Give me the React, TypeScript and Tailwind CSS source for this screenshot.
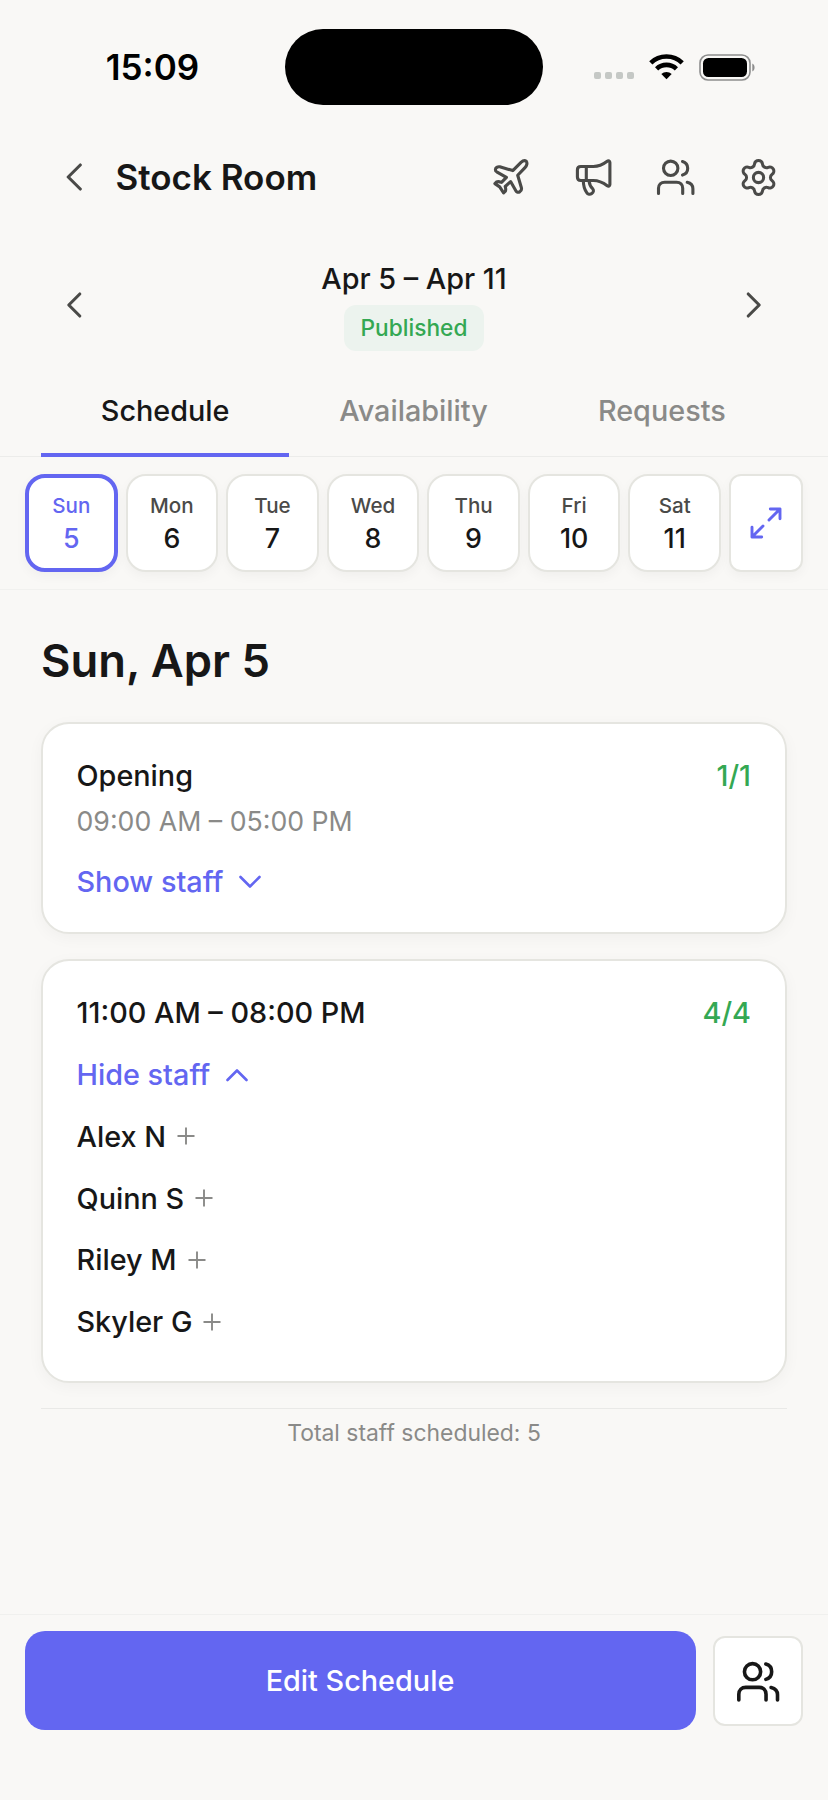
import type { ReactNode } from "react";

type Day = {
  label: string;
  date: number;
};

type Shift = {
  id: string;
  title: string;
  time?: string;
  filled: string;
  staff: string[];
  expanded: boolean;
};

const DAYS: Day[] = [
  { label: "Sun", date: 5 },
  { label: "Mon", date: 6 },
  { label: "Tue", date: 7 },
  { label: "Wed", date: 8 },
  { label: "Thu", date: 9 },
  { label: "Fri", date: 10 },
  { label: "Sat", date: 11 },
];

const TABS = ["Schedule", "Availability", "Requests"];

const SHIFTS: Shift[] = [
  {
    id: "opening",
    title: "Opening",
    time: "09:00 AM – 05:00 PM",
    filled: "1/1",
    staff: [],
    expanded: false,
  },
  {
    id: "midday",
    title: "11:00 AM – 08:00 PM",
    filled: "4/4",
    staff: ["Alex N", "Quinn S", "Riley M", "Skyler G"],
    expanded: true,
  },
];

type IconProps = {
  className?: string;
  viewBox?: string;
  strokeWidth?: number;
  children: ReactNode;
};

function Icon({ className = "size-10", viewBox = "0 0 40 40", strokeWidth = 3.1, children }: IconProps) {
  return (
    <svg
      className={`shrink-0 ${className}`}
      viewBox={viewBox}
      fill="none"
      stroke="currentColor"
      strokeWidth={strokeWidth}
      strokeLinecap="round"
      strokeLinejoin="round"
    >
      {children}
    </svg>
  );
}

function PlaneIcon() {
  return (
    <Icon>
      <path d="M34.300 4.200c-1.300-.9-3.600-.4-5.300 1.200L20.800 13.600 7.800 9.800c-2.200-.5-4.400 1-4.400 2.900 0 .9.500 1.600 1.300 2.100l9.700 5.600-4.900 5c-1.600-.6-3.500-1.100-4.900-.4l-1.700 1.600 4.800 3.300 3.900 6 1.800-1.700c.6-1.600.3-3.200-.2-4.700l5.400-4.900 5.400 9.400c.6 1.200 2.300 1.700 3.600.9 1.500-.9 2.200-2.300 1.800-4.100l-3.700-12.500 7.300-7.700c1.900-1.900 2.500-4.800 1.300-6.100z" />
    </Icon>
  );
}

function MegaphoneIcon() {
  return (
    <Icon viewBox="0.7 0 40 40">
      <path d="M7.500 9.500h12.500c6 0 10-2.200 13.900-5.200 1.200-.9 2.700-.3 2.700 1.200v22c0 1.500-1.500 2-2.700 1.200-3.900-3-7.900-5.200-13.900-5.200H7.500c-2 0-3.400-1.400-3.400-3.400v-7.200c0-2 1.400-3.400 3.400-3.400z" />
      <path d="M13 9.500v14" />
      <path d="M10 23.700c.1 4.500 1.100 8.500 3.300 11.700 1.200 2.100 3.500 2.300 5.200 1.100 1.800-1.200 2.100-3.200 1-4.600-2.400-2.200-3.400-4.700-3.800-8.200" />
    </Icon>
  );
}

function UsersIcon({ className, strokeWidth }: { className?: string; strokeWidth?: number }) {
  return (
    <Icon className={className} strokeWidth={strokeWidth}>
      <circle cx="14.700" cy="11.300" r="7.200" />
      <path d="M26.500 4.500c3.200.9 5.200 3.500 5.200 6.800s-2 5.900-5.200 6.800" />
      <path d="M2.500 36.500v-5.200c0-3.700 2.600-6.100 6.200-6.100h11.900c3.700 0 6.100 2.400 6.100 6.100v5.200" />
      <path d="M31.200 25.300c3.500.8 5.700 3.200 5.700 6.500v4.700" />
    </Icon>
  );
}

function SettingsIcon() {
  return (
    <Icon className="size-[41px]" viewBox="0 0 24 24" strokeWidth={1.8}>
      <path d="M9.671 4.136a2.340 2.340 0 0 1 4.659 0 2.340 2.340 0 0 0 3.319 1.915 2.340 2.340 0 0 1 2.330 4.033 2.340 2.340 0 0 0 0 3.831 2.340 2.340 0 0 1-2.330 4.033 2.340 2.340 0 0 0-3.319 1.915 2.340 2.340 0 0 1-4.659 0 2.340 2.340 0 0 0-3.320-1.915 2.340 2.340 0 0 1-2.330-4.033 2.340 2.340 0 0 0 0-3.831A2.340 2.340 0 0 1 6.350 6.051a2.340 2.340 0 0 0 3.319-1.915" />
      <circle cx="12" cy="12" r="3" />
    </Icon>
  );
}

function StatusBar() {
  return (
    <div className="flex h-[132px] items-start">
      <div className="flex h-[134px] w-[285px] items-center justify-center pl-5 text-[35px] font-semibold text-black">
        15:09
      </div>
      <div className="mt-[28.500px] h-[76px] w-[258px] rounded-full bg-black" />
      <div className="flex h-[134px] items-center pl-[51px]">
        <div className="mt-[17px] flex gap-1">
          {[0, 1, 2, 3].map((dot) => (
            <span key={dot} className="size-[7px] rounded-[2px] bg-[#c5c8c5]" />
          ))}
        </div>
        <svg className="ml-[15px] h-[26px] w-[35px]" viewBox="0 0 35 26" fill="none" stroke="#000">
          <path d="M1.800 8.800C10.400.4 24.600.4 33.200 8.800" strokeWidth="4.600" />
          <path d="M7.600 14.800c5.500-5.300 14.300-5.300 19.800 0" strokeWidth="4.600" />
          <path d="M12.300 19.900c3-2.700 7.400-2.700 10.400 0L17.500 25.300z" fill="#000" stroke="none" />
        </svg>
        <svg className="ml-[15px] h-[27px] w-[57px]" viewBox="0 0 57 27">
          <rect x="1" y="1" width="50" height="25" rx="8" fill="none" stroke="#8d8d8d" strokeWidth="1.600" />
          <rect x="4" y="4" width="44" height="19" rx="5.500" fill="#000" />
          <path d="M53.300 9.500c3 1.200 3 6.800 0 8z" fill="#8d8d8d" />
        </svg>
      </div>
    </div>
  );
}

function Header() {
  return (
    <header className="flex h-[90px] items-center pl-[66px] pr-[49.500px] text-[#4a4a48]">
      <Icon className="h-7 w-4" viewBox="0 0 16 28">
        <path d="M14.300 2 2.200 14l12.100 12" />
      </Icon>
      <h1 className="ml-[33.500px] text-[35px] font-semibold text-[#171717]">Stock Room</h1>
      <div className="ml-auto flex items-center gap-[42px]">
        <PlaneIcon />
        <MegaphoneIcon />
        <UsersIcon />
        <SettingsIcon />
      </div>
    </header>
  );
}

function WeekPicker() {
  return (
    <div className="flex h-[166px] items-center justify-between px-[66px] text-[#4a4a48]">
      <Icon className="h-7 w-4" viewBox="0 0 16 28">
        <path d="M13.800 3 2.800 14l11 11" />
      </Icon>
      <div className="flex flex-col items-center pb-1.5">
        <p className="text-[28.800px] font-medium leading-[52px] text-[#171717]">Apr 5 – Apr 11</p>
        <span className="flex h-[46px] items-center rounded-xl bg-[#ecf3ee] px-[17px] text-[22.700px] font-medium text-[#34a853]">
          Published
        </span>
      </div>
      <Icon className="h-7 w-4" viewBox="0 0 16 28">
        <path d="m2.200 3 11 11-11 11" />
      </Icon>
    </div>
  );
}

function Tabs() {
  return (
    <nav className="flex h-[69px] border-b border-[#ececea] pl-[41px] pr-[42px]">
      {TABS.map((tab, index) => (
        <div
          key={tab}
          className={`-mb-px flex flex-1 justify-center border-b-4 pt-0.5 text-[28.800px] font-medium leading-[42px] ${
            index === 0 ? "border-[#6366f1] text-[#171717]" : "border-transparent text-[#8a8a88]"
          }`}
        >
          {tab}
        </div>
      ))}
    </nav>
  );
}

function DayStrip() {
  return (
    <div className="flex h-[133px] items-start gap-2 border-b border-[#f1f1ef] px-[25px] pt-[17px]">
      <div className="grid flex-1 grid-cols-7 gap-2">
        {DAYS.map((day, index) => {
          const selected = index === 0;

          return (
            <div
              key={day.label}
              className={`flex h-[98px] flex-col items-center justify-center rounded-[20px] bg-white pb-0.5 font-medium shadow-[0_4px_12px_rgba(0,0,0,0.04)] ${
                selected ? "border-4 border-[#6366f1] text-[#6366f1]" : "border-2 border-[#e5e5e0] text-[#171717]"
              }`}
            >
              <span className={`text-[20.600px] leading-8 ${selected ? "" : "text-[#4a4a48]"}`}>{day.label}</span>
              <span className="text-[26.800px] leading-8">{day.date}</span>
            </div>
          );
        })}
      </div>
      <div className="flex h-[98px] w-[74px] items-center justify-center rounded-xl border-2 border-[#e5e5e0] bg-white text-[#6366f1] shadow-[0_4px_12px_rgba(0,0,0,0.04)]">
        <Icon className="size-8" viewBox="0 0 32 32" strokeWidth={2.9}>
          <path d="M19 13 30 2M20.300 2H30v9.700M13 19 2 30M2 20.300V30h9.700" />
        </Icon>
      </div>
    </div>
  );
}

function ShiftCard({ shift }: { shift: Shift }) {
  return (
    <article
      className={`rounded-[28px] border-2 border-[#e5e5e0] bg-white pl-[33.500px] pr-[34px] pt-[30px] text-[28.800px] font-medium text-[#171717] shadow-[0_4px_16px_rgba(0,0,0,0.04)] ${
        shift.expanded ? "pb-[28px]" : "pb-[19px]"
      }`}
    >
      <div className="flex h-[45px] items-center justify-between">
        <h3>{shift.title}</h3>
        <span className="text-[#34a853]">{shift.filled}</span>
      </div>
      {shift.time && <p className="text-[26.700px] font-normal leading-[44px] text-[#8a8a88]">{shift.time}</p>}

      <button className="mt-[8px] flex h-[62px] items-center gap-4 text-[#6366f1]">
        {shift.expanded ? "Hide staff" : "Show staff"}
        <Icon className="h-[14px] w-[22px]" viewBox="0 0 22 14" strokeWidth={2.6}>
          <path d={shift.expanded ? "M1.500 12 11 2.500l9.500 9.500" : "M1.500 2 11 11.500 20.500 2"} />
        </Icon>
      </button>

      {shift.expanded && (
        <ul>
          {shift.staff.map((name) => (
            <li key={name} className="flex h-[61.800px] items-center gap-[11px]">
              {name}
              <svg className="size-[18px] text-[#8a8a88]" viewBox="0 0 18 18" stroke="currentColor" strokeWidth="1.900">
                <path d="M9 .5v17M.5 9h17" />
              </svg>
            </li>
          ))}
        </ul>
      )}
    </article>
  );
}

export default function App() {
  return (
    <div className="flex h-[1800px] w-[828px] flex-col overflow-hidden bg-[#f9f8f6] font-['Inter',sans-serif]">
      <StatusBar />
      <Header />
      <WeekPicker />
      <Tabs />
      <DayStrip />

      <main className="flex-1 px-[41px] pt-[41px]">
        <h2 className="text-[45.300px] font-semibold leading-[60px] text-[#171717]">Sun, Apr 5</h2>
        <div className="mt-[30.500px] flex flex-col gap-[25px]">
          {SHIFTS.map((shift) => (
            <ShiftCard key={shift.id} shift={shift} />
          ))}
        </div>
        <p className="mt-[25px] border-t border-[#e9e9e7] text-center text-[22.900px] leading-[48px] text-[#8a8a88]">
          Total staff scheduled: 5
        </p>
      </main>

      <footer className="flex h-[186px] items-start gap-[17px] border-t border-[#f0f0ee] px-[25px] pt-4">
        <button className="h-[99px] flex-1 rounded-[20px] bg-[#6366f1] pr-px pt-px text-[28.800px] font-medium text-white">
          Edit Schedule
        </button>
        <button className="mt-[5px] flex size-[90px] items-center justify-center rounded-xl border-2 border-[#e5e5e0] bg-white text-[#171717]">
          <UsersIcon className="size-[45px]" strokeWidth={3.2} />
        </button>
      </footer>
    </div>
  );
}
